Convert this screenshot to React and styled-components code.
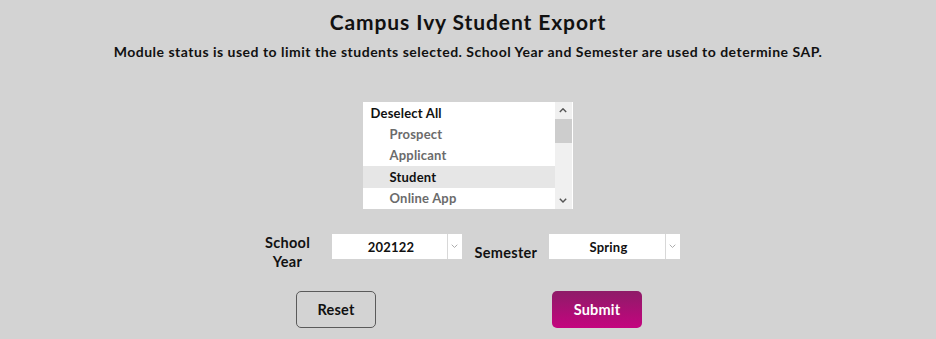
import React, { useState } from 'react';
import styled, { createGlobalStyle } from 'styled-components';

const GlobalStyle = createGlobalStyle`
    body {
        margin: 0;
        background: #d3d3d3;
        font-family: Lato, "Open Sans", "Liberation Sans", sans-serif;
        color: #111;
    }
`;

const Page = styled.div`
    display: flex;
    flex-direction: column;
    align-items: center;
    padding-top: 10px;
    height: 339px;
    box-sizing: border-box;
`;

const Title = styled.h1`
    margin: 0;
    font-size: 21px;
    line-height: 24px;
    font-weight: 700;
    letter-spacing: 0.9px;
`;

const Subtitle = styled.p`
    margin: 9px 0 0;
    font-size: 14px;
    line-height: 18px;
    font-weight: 700;
    letter-spacing: 0.5px;
`;

const ListBox = styled.div`
    display: flex;
    width: 210px;
    height: 107px;
    margin-top: 41px;
    margin-left: -1px;
    background: #fff;
    box-sizing: border-box;
    padding: 0 1px 0 0;
`;

const List = styled.div`
    flex: 1;
    display: flex;
    flex-direction: column;
`;

const Item = styled.div`
    height: 21.4px;
    display: flex;
    align-items: center;
    padding-left: ${props => props.head ? '8px' : '27px'};
    font-size: 13px;
    letter-spacing: 0.2px;
    font-weight: 700;
    color: ${props => props.head || props.selected ? '#111' : '#6b6b6b'};
    background: ${props => props.selected ? '#e6e6e6' : 'transparent'};
    cursor: pointer;
`;

const Scrollbar = styled.div`
    width: 17px;
    background: #f0f0f0;
    display: flex;
    flex-direction: column;
    align-items: center;
`;

const ScrollArrow = styled.div`
    height: 17px;
    width: 100%;
    display: flex;
    align-items: center;
    justify-content: center;
`;

const Thumb = styled.div`
    width: 100%;
    height: 24px;
    background: #cdcdcd;
`;

const Track = styled.div`
    flex: 1;
`;

const FieldRow = styled.div`
    display: flex;
    align-items: center;
    margin-top: 24px;
    margin-left: 7px;
`;

const Label = styled.div`
    font-size: 14.5px;
    line-height: 19px;
    font-weight: 700;
    letter-spacing: 0.3px;
    text-align: center;
    width: ${props => props.width}px;
    margin-right: ${props => props.gap}px;
`;

const Select = styled.div`
    display: flex;
    width: ${props => props.width}px;
    height: 25px;
    background: #fff;
    align-self: flex-start;
    margin-top: 1px;
    margin-right: ${props => props.gap || 0}px;
`;

const SelectValue = styled.div`
    flex: 1;
    display: flex;
    align-items: center;
    justify-content: center;
    font-size: 13px;
    letter-spacing: 0.2px;
    font-weight: 700;
    color: #111;
    padding-left: 4px;
`;

const SelectArrow = styled.div`
    width: 14px;
    border-left: 1px solid #d8d8d8;
    display: flex;
    align-items: center;
    justify-content: center;
`;

const ButtonRow = styled.div`
    display: flex;
    gap: 176px;
    margin-top: 20px;
    margin-left: 2px;
`;

const Button = styled.button`
    height: 37px;
    width: ${props => props.width}px;
    border-radius: 5px;
    font-family: Lato, "Open Sans", "Liberation Sans", sans-serif;
    font-size: 14.5px;
    letter-spacing: 0.2px;
    font-weight: 700;
    cursor: pointer;
    border: ${props => props.primary ? 'none' : '1px solid #5a5a5a'};
    color: ${props => props.primary ? '#fff' : '#111'};
    background: ${props => props.primary ? 'linear-gradient(#8e1c68, #c4047f)' : 'transparent'};
`;

const Chevron = ({ up, size = 8, color = '#555', width = 1.8 }) => (
    <svg width={size} height={size * 0.6} viewBox="0 0 10 6">
        <path
            d={up ? 'M1 5 L5 1 L9 5' : 'M1 1 L5 5 L9 1'}
            fill="none"
            stroke={color}
            strokeWidth={width}
        />
    </svg>
);

const statuses = ['Prospect', 'Applicant', 'Student', 'Online App'];

function App() {
    const [selected] = useState('Student');

    return (
        <Page>
            <GlobalStyle />
            <Title>Campus Ivy Student Export</Title>
            <Subtitle>Module status is used to limit the students selected. School Year and Semester are used to determine SAP.</Subtitle>
            <ListBox>
                <List>
                    <Item head>Deselect All</Item>
                    {statuses.map(s => (
                        <Item key={s} selected={s === selected}>{s}</Item>
                    ))}
                </List>
                <Scrollbar>
                    <ScrollArrow><Chevron up /></ScrollArrow>
                    <Thumb />
                    <Track />
                    <ScrollArrow><Chevron /></ScrollArrow>
                </Scrollbar>
            </ListBox>
            <FieldRow>
                <Label width={48} gap={20}>School Year</Label>
                <Select width={130} gap={13}>
                    <SelectValue>202122</SelectValue>
                    <SelectArrow><Chevron size={7} color="#aaa" width={1.4} /></SelectArrow>
                </Select>
                <Label width={62} gap={12}>Semester</Label>
                <Select width={131}>
                    <SelectValue>Spring</SelectValue>
                    <SelectArrow><Chevron size={7} color="#aaa" width={1.4} /></SelectArrow>
                </Select>
            </FieldRow>
            <ButtonRow>
                <Button width={80}>Reset</Button>
                <Button width={90} primary>Submit</Button>
            </ButtonRow>
        </Page>
    );
}

export default App;
